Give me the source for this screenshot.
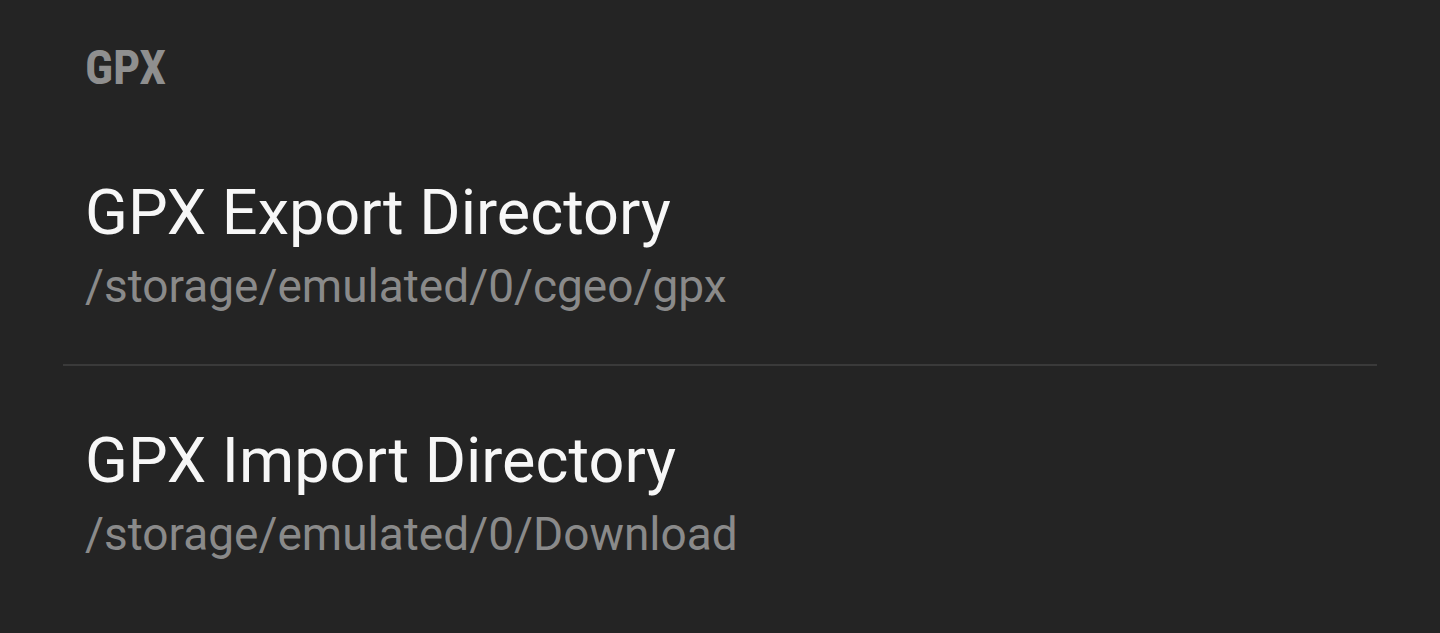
export default function App() {
  return (
    <div className="min-h-screen w-full bg-[#242424] font-['Roboto',sans-serif] overflow-hidden">
      <div className="pl-[85px] pt-[42px]">
        <div
          className="text-[48px] leading-[52px] font-bold text-[#8f8f8f]"
          style={{ fontStretch: "condensed" }}
        >
          GPX
        </div>
      </div>

      <div className="pl-[85px] pt-[82px] pb-[50px]">
        <div className="text-[63px] leading-[74px] text-[#f7f7f7]">GPX Export Directory</div>
        <div className="mt-[8px] text-[46px] leading-[56px] text-[#8a8a8a]">/storage/emulated/0/cgeo/gpx</div>
      </div>

      <div className="mx-[63px] h-[2px] bg-[#3a3a3a]" />

      <div className="pl-[85px] pt-[58px] pb-[44px]">
        <div className="text-[63px] leading-[74px] text-[#f7f7f7]">GPX Import Directory</div>
        <div className="mt-[8px] text-[46px] leading-[56px] text-[#8a8a8a]">/storage/emulated/0/Download</div>
      </div>
    </div>
  );
}
